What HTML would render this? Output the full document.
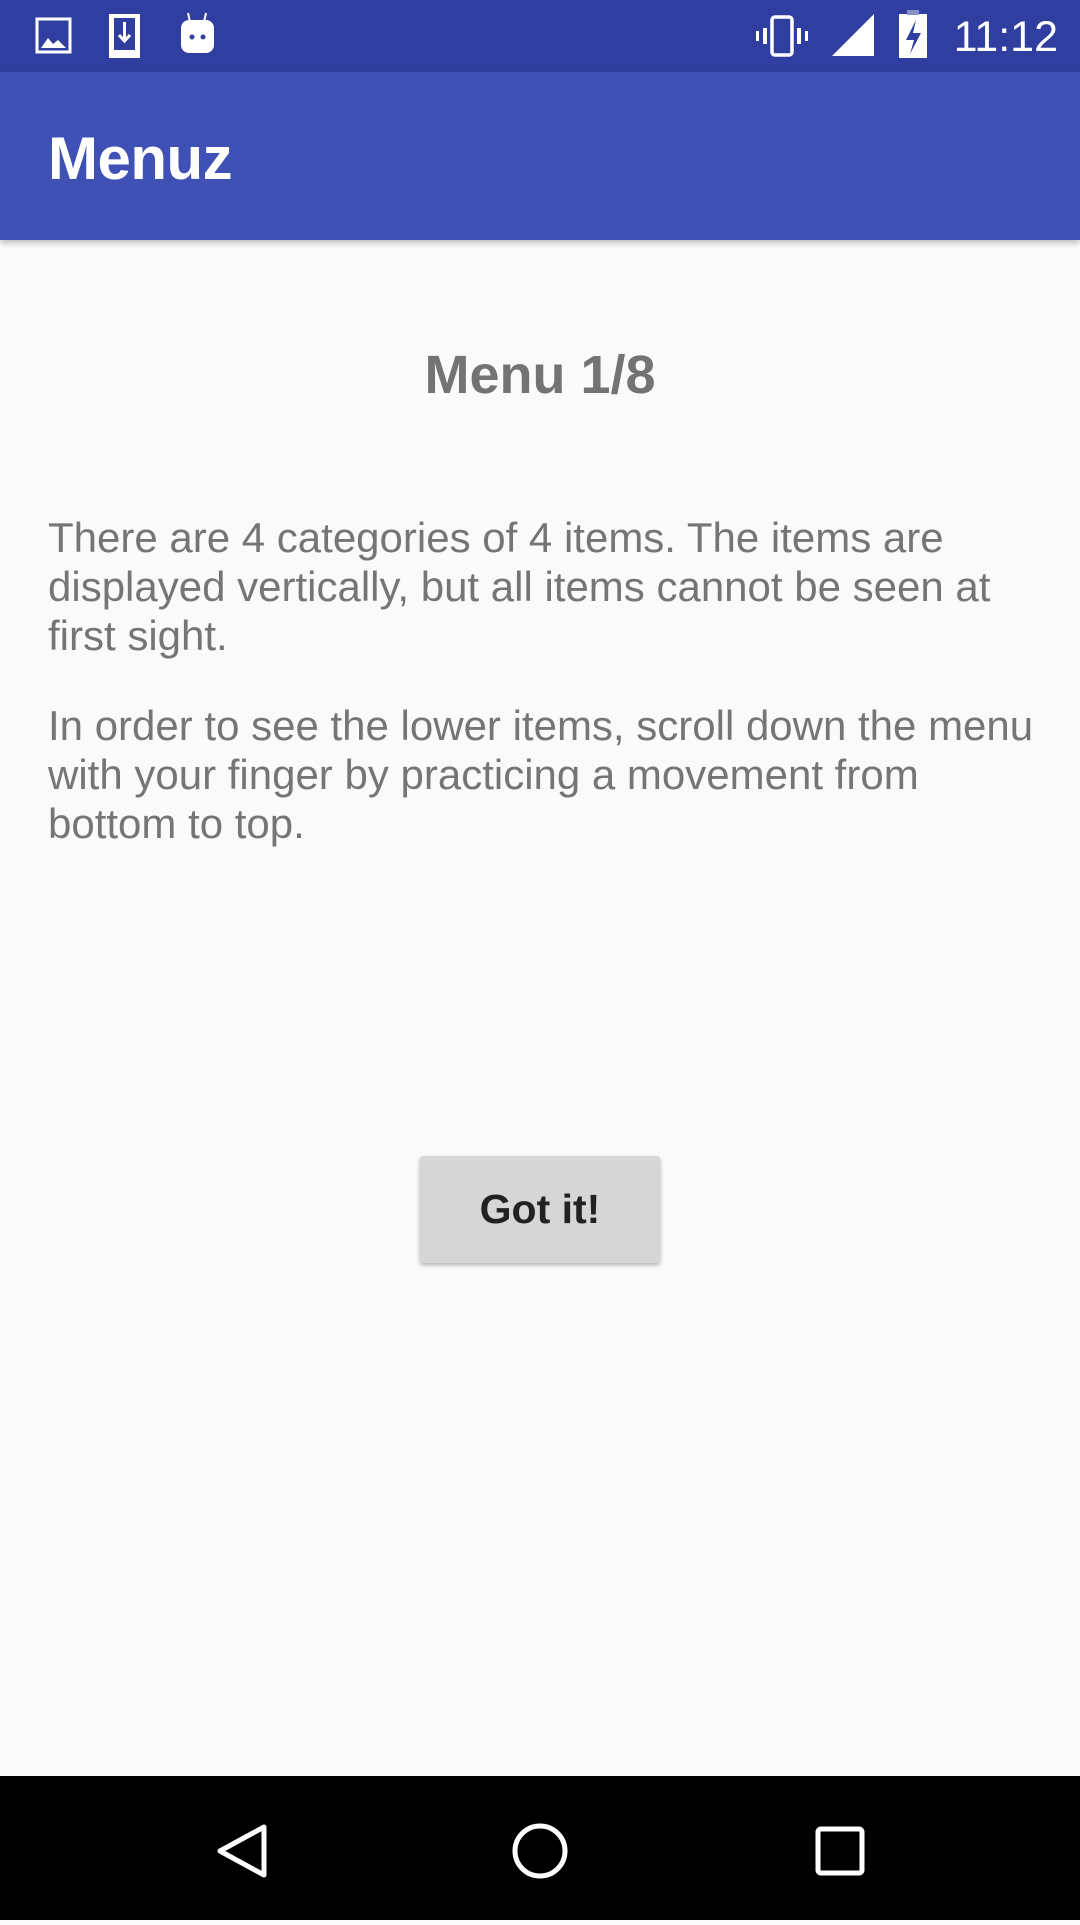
<!DOCTYPE html>
<html><head><meta charset="utf-8"><style>
*{margin:0;padding:0;box-sizing:border-box}
body{width:1080px;height:1920px;background:#fafafa;font-family:"Liberation Sans",Roboto,sans-serif;position:relative;overflow:hidden}
.sb{position:absolute;left:0;top:0;width:1080px;height:72px;background:#303f9f}
.ab{position:absolute;left:0;top:72px;width:1080px;height:168px;background:#3f51b5;box-shadow:0 3px 6px rgba(0,0,0,.25)}
.ab span{position:absolute;left:48px;top:52px;font-size:60px;color:#fff;font-weight:bold;letter-spacing:-0.5px}
.h{position:absolute;top:344px;left:0;width:1080px;text-align:center;font-size:54px;font-weight:bold;color:#737373}
.p{position:absolute;left:48px;width:1000px;font-size:42px;line-height:49px;color:#757575}
.btn{position:absolute;left:420px;top:1152px;width:240px;height:107px;background:#d6d6d6;border-radius:3px;box-shadow:0 2px 4px rgba(0,0,0,.3);text-align:center;line-height:107px;font-size:41px;font-weight:bold;color:#222}
.nb{position:absolute;left:0;top:1776px;width:1080px;height:144px;background:#000}
.time{position:absolute;right:22px;top:13px;color:#fff;font-size:43px}
</style></head><body>
<div class="sb">
<svg width="1080" height="72" style="position:absolute;left:0;top:0">
<rect x="37" y="19" width="33" height="33" fill="none" stroke="#fff" stroke-width="3"/>
<path d="M41 48 L48 38 L53 44 L58 40 L66 48 Z" fill="#fff"/>
<rect x="109" y="14" width="31" height="44" fill="#fff"/>
<rect x="114" y="18" width="21" height="32" fill="#303f9f"/>
<path d="M124.5 22 V40 M119 35 L124.5 41 L130 35" stroke="#fff" stroke-width="3" fill="none"/>
<line x1="188" y1="13" x2="190" y2="22" stroke="#fff" stroke-width="2"/>
<line x1="206" y1="13" x2="204" y2="22" stroke="#fff" stroke-width="2"/>
<rect x="181" y="20" width="33" height="33" rx="8" fill="#fff"/>
<circle cx="192" cy="37" r="2.5" fill="#303f9f"/><circle cx="203" cy="37" r="2.5" fill="#303f9f"/>
<rect x="772" y="17" width="20" height="38" rx="3" fill="none" stroke="#fff" stroke-width="3.5"/>
<rect x="763" y="28" width="4" height="16" fill="#fff"/><rect x="797" y="28" width="4" height="16" fill="#fff"/>
<rect x="756" y="31" width="3" height="10" fill="#fff"/><rect x="805" y="31" width="3" height="10" fill="#fff"/>
<path d="M832 56 L874 56 L874 14 Z" fill="#fff"/>
<rect x="899" y="14" width="28" height="44" fill="#fff"/>
<rect x="907" y="10" width="12" height="5" fill="#8890c8"/>
<path d="M916 20 L906 40 L914 40 L910 54 L921 33 L913 33 Z" fill="#303f9f"/>
</svg>
<div class="time">11:12</div>
</div>
<div class="ab"><span>Menuz</span></div>
<div class="h">Menu 1/8</div>
<div class="p" style="top:513px">There are 4 categories of 4 items. The items are displayed vertically, but all items cannot be seen at first sight.</div>
<div class="p" style="top:701px">In order to see the lower items, scroll down the menu with your finger by practicing a movement from bottom to top.</div>
<div class="btn" style="top:1156px">Got it!</div>
<div class="nb">
<svg width="1080" height="144">
<path d="M264 51 L264 99 L220 75 Z" fill="none" stroke="#fff" stroke-width="5" stroke-linejoin="round"/>
<circle cx="540" cy="75" r="25" fill="none" stroke="#fff" stroke-width="5"/>
<rect x="818" y="53" width="44" height="44" rx="3" fill="none" stroke="#fff" stroke-width="5"/>
</svg>
</div>
</body></html>
